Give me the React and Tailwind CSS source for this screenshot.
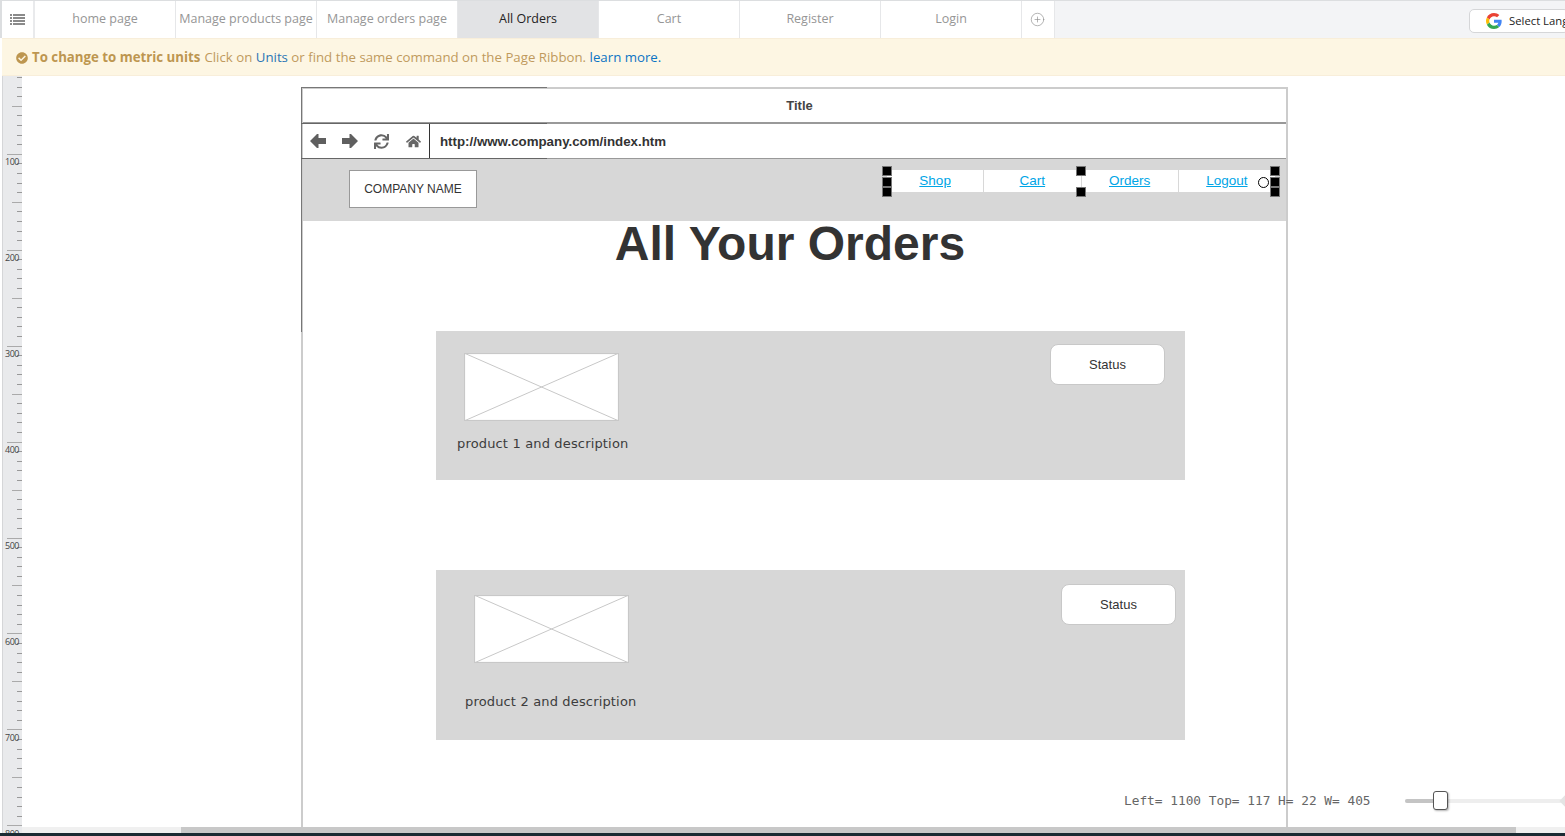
import React from "react";
import { FaSync, FaHome, FaCheckCircle } from "react-icons/fa";
import { CirclePlus } from "lucide-react";

const tabs = ["home page", "Manage products page", "Manage orders page", "All Orders", "Cart", "Register", "Login"];
const navLinks = ["Shop", "Cart", "Orders", "Logout"];
const ticks = Array.from({ length: 80 }, (_, i) => i);

function GoogleLogo() {
    return (
        <svg width="16" height="16" viewBox="0 0 48 48">
            <path fill="#EA4335" d="M24 9.5c3.5 0 6.700 1.200 9.200 3.600l6.900-6.900C35.900 2.400 30.400 0 24 0 14.600 0 6.500 5.400 2.600 13.200l8 6.200C12.500 13.600 17.800 9.500 24 9.500z" />
            <path fill="#4285F4" d="M47 24.500c0-1.600-.1-3.100-.4-4.500H24v9h13c-.6 3-2.300 5.500-4.800 7.200l7.700 6c4.500-4.200 7.100-10.300 7.100-17.700z" />
            <path fill="#FBBC05" d="M10.600 28.600c-.5-1.400-.8-3-.8-4.600s.3-3.200.8-4.600l-8-6.200C.9 16.500 0 20.100 0 24s.9 7.500 2.600 10.800l8-6.200z" />
            <path fill="#34A853" d="M24 48c6.500 0 11.900-2.100 15.900-5.800l-7.700-6c-2.200 1.400-4.900 2.300-8.200 2.300-6.200 0-11.500-4.200-13.400-9.800l-8 6.200C6.500 42.600 14.600 48 24 48z" />
        </svg>
    );
}

function MenuIcon() {
    return (
        <svg width="15" height="11" viewBox="0 0 15 11" fill="#8a8a8a">
            <path d="M0 0h2v2H0zM3 0h12v2H3zM0 3h2v2H0zM3 3h12v2H3zM0 6h2v2H0zM3 6h12v2H3zM0 9h2v2H0zM3 9h12v2H3z" />
        </svg>
    );
}

function ArrowLeft() {
    return (
        <svg width="16" height="14" viewBox="0 0 16 14" fill="#5f5f5f">
            <path d="M0 7L7 0h1.500v4H16v6H8.500v4H7z" />
        </svg>
    );
}

function ArrowRight() {
    return (
        <svg width="16" height="14" viewBox="0 0 16 14" fill="#5f5f5f">
            <path d="M16 7L9 0H7.500v4H0v6h7.500v4H9z" />
        </svg>
    );
}

function Ruler() {
    return (
        <div className="w-[20px] ml-[2px] bg-[#e9eaec] border-l border-[#d5d6d8] pt-[1px] overflow-hidden shrink-0">
            {ticks.map((i) => {
                const long = i % 10 === 8;
                const mid = i % 10 === 3;
                const label = i % 10 === 9 ? Math.floor(i / 10) * 100 + 100 : null;
                return (
                    <div key={i} className="relative h-[9.6px] flex justify-end">
                        <div className={long ? "w-[15px] h-[1px] bg-[#aaaaaa]" : mid ? "w-[10px] h-[1px] bg-[#aaaaaa]" : "w-[5px] h-[1px] bg-[#999999]"} />
                        {label && (
                            <span className="absolute left-[2px] top-[-7px] text-[9px] leading-[12px] text-[#444] tracking-[-0.5px]">{label}</span>
                        )}
                    </div>
                );
            })}
        </div>
    );
}

function Handle() {
    return <div className="w-[10px] h-[10px] bg-black border border-[#777]" />;
}

function Placeholder() {
    return (
        <svg width="155" height="68" viewBox="0 0 155 68" className="block">
            <rect x="0.500" y="0.500" width="154" height="67" fill="#fff" stroke="#c8c8c8" strokeWidth="1.200" />
            <path d="M0 0L155 68M155 0L0 68" stroke="#c8c8c8" strokeWidth="1" />
        </svg>
    );
}

function StatusButton({ className }) {
    return (
        <div className={"absolute w-[115px] h-[41px] bg-white border border-[#c8c8c8] rounded-[8px] flex items-center justify-center text-[13px] text-[#333] " + className}>
            Status
        </div>
    );
}

function Wireframe() {
    return (
        <div className="absolute left-[279px] top-[11px] w-[987px] h-[745px] bg-white border-t-2 border-r-2 border-[#cccccc] border-l-2 font-['Liberation_Sans',sans-serif]">
            {/* darker lines on the part of the frame that was selected */}
            <div className="absolute left-[-2px] top-[-2px] w-[246px] h-[1px] bg-[#777]" />
            <div className="absolute left-[-2px] top-[-2px] w-[1px] h-[245px] bg-[#777]" />
            <div className="absolute left-[-2px] top-[34px] w-[246px] h-[1px] bg-[#666]" />
            <div className="absolute left-[-2px] top-[69px] w-[246px] h-[1px] bg-[#666]" />

            <div className="h-[35px] border-b-2 border-[#999] flex items-center justify-center pl-[10px] text-[13px] font-bold text-[#444]">
                Title
            </div>
            <div className="h-[35px] flex items-center border-b border-[#999]">
                <div className="w-[127px] h-full border-r border-[#333] flex items-center pl-[7px]">
                    <div className="w-[32px]"><ArrowLeft /></div>
                    <div className="w-[32px]"><ArrowRight /></div>
                    <div className="w-[32px]"><FaSync className="text-[15px] text-[#666]" /></div>
                    <FaHome className="text-[15px] text-[#666]" />
                </div>
                <span className="ml-[10px] mt-[1px] text-[13.300px] font-bold text-[#333]">http://www.company.com/index.htm</span>
            </div>
            <div className="relative h-[62px] bg-[#d7d7d7]">
                <div className="absolute left-[46px] top-[11px] w-[128px] h-[38px] bg-white border border-[#999] flex items-center justify-center text-[12px] text-[#333]">
                    COMPANY NAME
                </div>
                <div className="absolute left-[584px] top-[11px] w-[388px] h-[22px] bg-white flex">
                    {navLinks.map((link, i) => (
                        <div key={link} className={"flex-1 flex items-center justify-center text-[13.500px] text-[#00a5e6] underline " + (i < 3 ? "border-r border-[#d8d8d8]" : "")}>
                            {link}
                        </div>
                    ))}
                </div>
                <div className="absolute left-[579px] top-[7px] flex flex-col gap-[0.5px]"><Handle /><Handle /><Handle /></div>
                <div className="absolute left-[773px] top-[7px] flex flex-col gap-[11px]"><Handle /><Handle /></div>
                <div className="absolute left-[967px] top-[7px] flex flex-col gap-[0.5px]"><Handle /><Handle /><Handle /></div>
                <div className="absolute left-[955px] top-[18px] w-[11px] h-[11px] rounded-full bg-white border-[1.5px] border-black" />
            </div>

            <h1 className="absolute left-[-1px] top-[128px] w-[976px] text-center text-[48px] leading-[54px] font-bold text-[#333]">All Your Orders</h1>

            <div className="absolute left-[133px] top-[242px] w-[749px] h-[149px] bg-[#d7d7d7] font-['DejaVu_Sans',sans-serif]">
                <div className="absolute left-[28px] top-[22px]"><Placeholder /></div>
                <p className="absolute left-[21px] top-[104px] text-[13px] tracking-[0.16px] leading-[18px] text-[#3c3c3c]">product 1 and description</p>
                <StatusButton className="left-[614px] top-[13px] font-['Liberation_Sans',sans-serif]" />
            </div>
            <div className="absolute left-[133px] top-[481px] w-[749px] h-[170px] bg-[#d7d7d7] font-['DejaVu_Sans',sans-serif]">
                <div className="absolute left-[38px] top-[25px]"><Placeholder /></div>
                <p className="absolute left-[29px] top-[123px] text-[13px] tracking-[0.16px] leading-[18px] text-[#3c3c3c]">product 2 and description</p>
                <StatusButton className="left-[625px] top-[14px] font-['Liberation_Sans',sans-serif]" />
            </div>
        </div>
    );
}

export default function App() {
    return (
        <div className="relative w-[1565px] h-[836px] overflow-hidden bg-white flex flex-col font-['Open_Sans',sans-serif]">
            {/* page tabs */}
            <div className="h-[38px] shrink-0 flex bg-[#f3f4f6] border-t border-[#dcdee0] border-l-2">
                <div className="w-[33px] bg-white border-r-2 border-[#e9eaec] flex items-center justify-center">
                    <MenuIcon />
                </div>
                {tabs.map((tab) => (
                    <div
                        key={tab}
                        className={
                            "w-[141px] flex items-center justify-center border-r border-[#e6e7e9] text-[12.5px] whitespace-nowrap " +
                            (tab === "All Orders" ? "bg-[#e2e3e5] text-[#222]" : "bg-white text-[#969696]")
                        }
                    >
                        {tab}
                    </div>
                ))}
                <div className="w-[33px] pr-[2px] bg-white border-r border-[#e6e7e9] flex items-center justify-center text-[#888]">
                    <CirclePlus size={15} strokeWidth={1} />
                </div>
                <div className="ml-auto mt-[8px] mr-[-4px] w-[100px] h-[24px] bg-white border border-[#d5d6d8] rounded-[5px] flex items-center gap-[7px] pl-[16px] text-[11.300px] text-[#222] whitespace-nowrap overflow-hidden">
                    <span className="shrink-0"><GoogleLogo /></span>
                    Select Language
                </div>
            </div>

            {/* metric units notice */}
            <div className="h-[38px] shrink-0 ml-[2px] pt-[1px] bg-[#fdf6e3] border-y border-[#f8eeda] flex items-center gap-[4px] pl-[14px] text-[13.250px] text-[#c09a5d] whitespace-nowrap">
                <FaCheckCircle className="text-[12px] text-[#bd9650]" />
                <span className="font-bold text-[#bd9650]">To change to metric units</span>
                <span>Click on <span className="text-[#2a75b5]">Units</span> or find the same command on the Page Ribbon. <span className="text-[#0b74c4]">learn more.</span></span>
            </div>

            <div className="flex-1 flex min-h-0">
                <Ruler />
                <div className="flex-1 flex flex-col min-w-0">
                    <div className="relative flex-1 overflow-hidden">
                        <Wireframe />
                        <div className="absolute left-[1102px] top-[717px] font-['DejaVu_Sans_Mono',monospace] text-[12.800px] leading-[16px] text-[#666] whitespace-pre">
                            Left= 1100 Top= 117 H= 22 W= 405
                        </div>
                        <div className="absolute left-[1383px] top-[723px] w-[160px] h-[4px] rounded-full bg-[#eeeeee]">
                            <div className="w-[30px] h-full rounded-l-full bg-[#c4c4c4]" />
                        </div>
                        <div className="absolute left-[1539px] top-[721px] w-[8px] h-[8px] rotate-45 bg-[#e4e4e4]" />
                        <div className="absolute left-[1411px] top-[715px] w-[15px] h-[19px] bg-white border border-[#555] rounded-[3px] shadow-[1px_1px_2px_rgba(0,0,0,0.3)]" />
                    </div>

                    {/* horizontal scrollbar */}
                    <div className="h-[6px] shrink-0 bg-[#f0f0f0] relative">
                        <div className="absolute left-[159px] w-[1335px] h-full bg-[#c8c8c8]" />
                    </div>
                </div>
            </div>
            <div className="h-[3px] shrink-0 bg-[#1b2b33]" />
        </div>
    );
}
